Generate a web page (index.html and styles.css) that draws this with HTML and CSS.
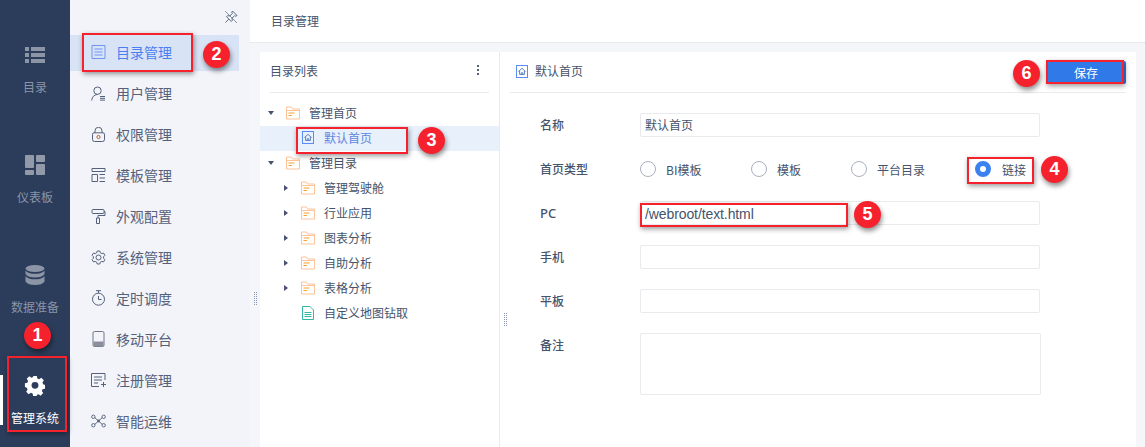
FILE: index.html
```html
<!DOCTYPE html>
<html lang="zh-CN">
<head>
  <meta charset="UTF-8" />
  <title>目录管理</title>
  <link rel="stylesheet" href="styles.css">
</head>
<body>
  <svg class="defs" width="0" height="0">
    <symbol id="folder" viewBox="0 0 14 14">
      <path d="M.5 13V1h4.800l1.400 2h6.800v10z" fill="none" stroke="#fdc39a"/>
      <path d="M.5 4.500h13" stroke="#fdc39a" fill="none"/>
      <path d="M2.500 7h6M2.500 9.500h3.500" stroke="#f9a02e" fill="none"/>
    </symbol>
    <symbol id="home" viewBox="0 0 12 13">
      <rect x=".5" y=".5" width="11" height="12" fill="none" stroke="#5b8cf5"/>
      <path d="M2.400 6.500 6 3.400l3.600 3.100M3.600 5.800v3.700h4.800V5.800M5.200 9.500V7.800h1.600v1.700" fill="none" stroke="#5f86c4"/>
    </symbol>
  </svg>

  <nav class="rail">
    <a class="rail-item">
      <svg class="rail-icon" width="20" height="16" viewBox="0 0 20 16"><path d="M0 0h4v4H0zM6 0h14v4H6zM0 6h4v4H0zM6 6h14v4H6zM0 12h4v4H0zM6 12h14v4H6z" fill="#8c95a6"/></svg>
      <span>目录</span>
    </a>
    <a class="rail-item">
      <svg class="rail-icon" width="20" height="20" viewBox="0 0 20 20"><path d="M1 0h7a1 1 0 0 1 1 1v11a1 1 0 0 1-1 1H1a1 1 0 0 1-1-1V1a1 1 0 0 1 1-1zM12 0h7a1 1 0 0 1 1 1v5a1 1 0 0 1-1 1h-7a1 1 0 0 1-1-1V1a1 1 0 0 1 1-1zM12 9h7a1 1 0 0 1 1 1v9a1 1 0 0 1-1 1h-7a1 1 0 0 1-1-1v-9a1 1 0 0 1 1-1zM1 15h7a1 1 0 0 1 1 1v3a1 1 0 0 1-1 1H1a1 1 0 0 1-1-1v-3a1 1 0 0 1 1-1z" fill="#9299a8"/></svg>
      <span>仪表板</span>
    </a>
    <a class="rail-item">
      <svg class="rail-icon" width="20" height="20" viewBox="0 0 20 20"><ellipse cx="10" cy="3.500" rx="9.500" ry="3.500" fill="#8c95a6"/><path d="M.5 5.500C2 8 5.500 8.800 10 8.800s8-.8 9.500-3.300v3.500C18 11.500 14.500 12.500 10 12.500S2 11.500.5 9zM.5 11c1.500 2.500 5 3.300 9.500 3.300s8-.8 9.500-3.300v5.500C18 19 14.500 20 10 20S2 19 .5 16.500z" fill="#8c95a6"/></svg>
      <span>数据准备</span>
    </a>
    <a class="rail-item active">
      <svg class="rail-icon" width="22" height="22" viewBox="0 0 22 22"><path fill="#fff" fill-rule="evenodd" d="M9 1h4l.6 2.700 1.900.8L17.900 3l2.800 2.800-1.500 2.400.8 1.900 2 .9v4l-2.700.6-.8 1.900 1.500 2.300-2.800 2.800-2.400-1.500-1.900.8L13 23H9l-.6-2.700-1.900-.8L4.100 21l-2.800-2.800 1.500-2.400-.8-1.900L-.1 13V9l2.700-.6.800-1.900L1.900 4.100 4.700 1.300 7.100 2.800 9 2zM11 7.500a3.800 3.800 0 1 0 0 7.600 3.800 3.800 0 0 0 0-7.600z" transform="translate(0 -1)"/></svg>
      <span>管理系统</span>
    </a>
  </nav>

  <aside class="submenu">
    <div class="pin-row">
      <svg width="14" height="14" viewBox="0 0 14 14"><path d="M8.500 1 13 5.500 11.800 6.200 10.500 5.700 8 8.200 8.300 10.500 7.300 11.500 2.500 6.700 3.500 5.700 5.800 6 8.300 3.500 7.800 2.200zM4.800 9.200 1.500 12.500" fill="none" stroke="#5c6a80"/><path d="M1 1l12 12" stroke="#5c6a80" stroke-width=".7"/></svg>
    </div>
    <ul class="menu">
      <li class="menu-item active">
        <svg width="14" height="14" viewBox="0 0 14 14"><path d="M.5.500h13v13H.5zM3 4h8M3 7h8M3 10h8" fill="none" stroke="#6f93f2"/></svg>
        目录管理
      </li>
      <li class="menu-item">
        <svg width="15" height="15" viewBox="0 0 15 15"><path d="M6.500 1a3.700 3.700 0 1 1 0 7.400 3.700 3.700 0 0 1 0-7.400zM.7 14.500C1 11 3 8.800 6.500 8.400M9 10.500h5M9 12.300h5M9 14.100h5" fill="none" stroke="#55617a"/></svg>
        用户管理
      </li>
      <li class="menu-item">
        <svg width="14" height="15" viewBox="0 0 14 15"><path d="M3.500 6V3.800a3.500 3.500 0 0 1 7 0V6M2.500 5.800h9a1.500 1.500 0 0 1 1.500 1.500v5.200a2 2 0 0 1-2 2H3a2 2 0 0 1-2-2V7.300a1.500 1.500 0 0 1 1.500-1.500z" fill="none" stroke="#55617a"/><circle cx="7" cy="10" r="1.600" fill="none" stroke="#b5652f"/></svg>
        权限管理
      </li>
      <li class="menu-item">
        <svg width="14" height="14" viewBox="0 0 14 14"><path d="M.5.500h13v3H.5zM.5 6.500h5.500v7H.5zM8 6.500h5.500M8 10h5.500M8 13.500h5.500" fill="none" stroke="#55617a"/></svg>
        模板管理
      </li>
      <li class="menu-item">
        <svg width="14" height="15" viewBox="0 0 14 15"><path d="M1.500.5h10a1 1 0 0 1 1 1v2a1 1 0 0 1-1 1h-10a1 1 0 0 1-1-1v-2a1 1 0 0 1 1-1zM12.500 2.500h1v4H6.500v2.500M5 9h3v5.500H5z" fill="none" stroke="#55617a"/></svg>
        外观配置
      </li>
      <li class="menu-item">
        <svg width="15" height="15" viewBox="0 0 15 15"><path d="M6.200 1h2.600l.5 1.800 1.500.8 1.800-.5 1.300 2.300-1.300 1.300v1.600l1.300 1.300-1.300 2.300-1.800-.5-1.500.8-.5 1.800H6.200l-.5-1.800-1.500-.8-1.800.5-1.300-2.300 1.300-1.300V6.700L1.100 5.400l1.300-2.300 1.800.5 1.500-.8z" fill="none" stroke="#55617a"/><circle cx="7.500" cy="7.500" r="2.500" fill="none" stroke="#55617a"/></svg>
        系统管理
      </li>
      <li class="menu-item">
        <svg width="14" height="16" viewBox="0 0 14 16"><circle cx="7" cy="9.200" r="6" fill="none" stroke="#55617a"/><path d="M4.500.7h5M7 .7v2.500M7 6v3.500h3" fill="none" stroke="#55617a"/></svg>
        定时调度
      </li>
      <li class="menu-item">
        <svg width="12" height="16" viewBox="0 0 12 16"><rect x=".5" y=".5" width="11" height="15" rx="1.500" fill="none" stroke="#6d7688"/><rect x="1" y="10.500" width="10" height="5" fill="#8a8f9b"/></svg>
        移动平台
      </li>
      <li class="menu-item">
        <svg width="15" height="14" viewBox="0 0 15 14"><path d="M14 7V.5H.5v13H8M3 4h8M3 7h8M3 10h4M10 11.500h5M12.500 9v5" fill="none" stroke="#55617a"/></svg>
        注册管理
      </li>
      <li class="menu-item">
        <svg width="16" height="14" viewBox="0 0 16 14"><path d="M3 2.500l10 9M13 2.500l-10 9" stroke="#55617a" fill="none"/><circle cx="2.500" cy="2.500" r="1.800" fill="#f2f4f9" stroke="#55617a"/><circle cx="13.500" cy="2.500" r="1.800" fill="#f2f4f9" stroke="#55617a"/><circle cx="2.500" cy="11.500" r="1.800" fill="#f2f4f9" stroke="#55617a"/><circle cx="13.500" cy="11.500" r="1.800" fill="#f2f4f9" stroke="#55617a"/><circle cx="8" cy="7" r="1.500" fill="#55617a"/></svg>
        智能运维
      </li>
    </ul>
  </aside>

  <main class="main">
    <header class="main-header">目录管理</header>
    <div class="workspace">
      <section class="tree-panel">
        <div class="panel-title">
          <span>目录列表</span>
          <span class="more"><i></i><i></i><i></i></span>
        </div>
        <ul class="tree">
          <li class="tree-row level-0"><i class="caret-down"></i><svg class="tree-icon"><use href="#folder"/></svg>管理首页</li>
          <li class="tree-row level-1 selected"><svg class="tree-icon small"><use href="#home"/></svg>默认首页</li>
          <li class="tree-row level-0"><i class="caret-down"></i><svg class="tree-icon"><use href="#folder"/></svg>管理目录</li>
          <li class="tree-row level-1"><i class="caret-right"></i><svg class="tree-icon"><use href="#folder"/></svg>管理驾驶舱</li>
          <li class="tree-row level-1"><i class="caret-right"></i><svg class="tree-icon"><use href="#folder"/></svg>行业应用</li>
          <li class="tree-row level-1"><i class="caret-right"></i><svg class="tree-icon"><use href="#folder"/></svg>图表分析</li>
          <li class="tree-row level-1"><i class="caret-right"></i><svg class="tree-icon"><use href="#folder"/></svg>自助分析</li>
          <li class="tree-row level-1"><i class="caret-right"></i><svg class="tree-icon"><use href="#folder"/></svg>表格分析</li>
          <li class="tree-row level-1 leaf">
            <svg class="tree-icon" viewBox="0 0 14 14"><path d="M1.500.5h7.500l3.500 3.500v9.500h-11zM3.500 6.500h7M3.500 8.500h7M3.500 10.500h7" fill="none" stroke="#35b5a5"/></svg>
            自定义地图钻取
          </li>
        </ul>
      </section>

      <section class="detail-panel">
        <div class="detail-head">
          <svg class="tree-icon small"><use href="#home"/></svg>
          <span class="detail-name">默认首页</span>
          <button class="save-btn">保存</button>
        </div>
        <div class="form">
          <label class="form-label">名称</label>
          <div class="field">默认首页</div>

          <label class="form-label">首页类型</label>
          <div class="radios">
            <span class="radio w-bi"><i></i>BI模板</span>
            <span class="radio w-tpl"><i></i>模板</span>
            <span class="radio w-plat"><i></i>平台目录</span>
            <span class="radio on"><i></i>链接</span>
          </div>

          <label class="form-label plain">PC</label>
          <div class="field url">/webroot/text.html</div>

          <label class="form-label">手机</label>
          <div class="field"></div>

          <label class="form-label">平板</label>
          <div class="field"></div>

          <label class="form-label">备注</label>
          <div class="field note"></div>
        </div>
      </section>
    </div>
  </main>

  <i class="grip grip-left"></i>
  <i class="grip grip-right"></i>

  <div class="box box-1"></div>
  <div class="box box-2"></div>
  <div class="box box-3"></div>
  <div class="box box-4"></div>
  <div class="box box-5"></div>
  <div class="box box-6"></div>
  <div class="dot dot-1">1</div>
  <div class="dot dot-2">2</div>
  <div class="dot dot-3">3</div>
  <div class="dot dot-4">4</div>
  <div class="dot dot-5">5</div>
  <div class="dot dot-6">6</div>
</body>
</html>
```

FILE: styles.css
```css
* {
  box-sizing: border-box;
}
html, body {
  height: 100%;
}
body {
  display: flex;
  margin: 0;
  overflow: hidden;
  font-family: 'Noto Sans CJK SC', 'Noto Sans', sans-serif;
  font-size: 12px;
  color: #45536b;
  background: #fff;
}
ul {
  list-style: none;
  margin: 0;
  padding: 0;
}
.defs {
  position: absolute;
}

/* left rail */
.rail {
  flex: 0 0 70px;
  background: #2c3d5b;
}
.rail-item {
  position: relative;
  display: flex;
  flex-direction: column;
  align-items: center;
  height: 110px;
  padding-top: 45px;
  color: #8a94a6;
  line-height: 16px;
}
.rail-icon {
  height: 20px;
  margin-bottom: 14px;
}
.rail-item:nth-child(4) {
  padding-top: 46px;
  color: #fff;
}
.rail-item.active::before {
  content: '';
  position: absolute;
  left: 0;
  top: 45px;
  width: 3px;
  height: 50px;
  background: #fff;
}

/* second level menu */
.submenu {
  flex: 0 0 180px;
  background: #f2f4f9;
}
.pin-row {
  display: flex;
  justify-content: flex-end;
  align-items: center;
  height: 33px;
  padding: 0 12px 0 0;
}
.menu-item {
  display: flex;
  align-items: center;
  gap: 10px;
  height: 36px;
  margin: 0 11px 5px 0;
  padding: 0 0 2px 21px;
  font-size: 14px;
  color: #55617a;
}
.menu-item svg {
  flex: 0 0 15px;
}
.menu-item:first-child {
  margin-top: 2px;
}
.menu-item.active {
  background: #d9e3f6;
  color: #4a7ff0;
}

/* main */
.main {
  flex: 1;
  display: flex;
  flex-direction: column;
  min-width: 0;
}
.main-header {
  flex: 0 0 43px;
  padding-left: 21px;
  line-height: 42px;
  border-bottom: 1px solid #e8eaee;
}
.workspace {
  flex: 1;
  display: flex;
  padding: 9px 9px 0 10px;
  background: #f5f6f9;
}
.tree-panel {
  flex: 0 0 240px;
  background: #fff;
  border-right: 1px solid #e8eaee;
}
.panel-title {
  display: flex;
  justify-content: space-between;
  align-items: center;
  height: 41px;
  margin: 0 10px;
  padding-bottom: 4px;
  border-bottom: 1px solid #e8eaee;
}
.more {
  display: flex;
  flex-direction: column;
  gap: 2px;
  margin-right: 10px;
}
.more i {
  width: 2px;
  height: 2px;
  background: #55617a;
}
.tree {
  padding-top: 8px;
}
.tree-row {
  position: relative;
  display: flex;
  align-items: center;
  height: 25px;
  padding-bottom: 2px;
}
.level-0 {
  padding-left: 26px;
}
.level-1 {
  padding-left: 41px;
}
.tree-row.selected {
  background: #e8f0fc;
  color: #5f87e0;
}
.tree-icon {
  flex: 0 0 14px;
  width: 14px;
  height: 14px;
  margin-right: 9px;
}
.tree-icon.small {
  flex-basis: 12px;
  width: 12px;
  height: 13px;
  margin-right: 10px;
  margin-left: 1px;
}
.caret-down {
  position: absolute;
  left: 8px;
  top: 10px;
  border-top: 4px solid #45536b;
  border-left: 3.500px solid transparent;
  border-right: 3.500px solid transparent;
}
.caret-right {
  position: absolute;
  left: 24px;
  top: 9px;
  border-left: 4px solid #4a4f73;
  border-top: 3.500px solid transparent;
  border-bottom: 3.500px solid transparent;
}

/* detail */
.detail-panel {
  flex: 1;
  background: #fff;
  padding: 0 10px;
}
.detail-head {
  display: flex;
  align-items: center;
  height: 41px;
  padding-left: 4px;
  border-bottom: 1px solid #e8eaee;
}
.detail-head .tree-icon {
  margin: 0 7px 2px 2px;
}
.detail-name {
  flex: 1;
  margin-bottom: 4px;
}
.save-btn {
  width: 80px;
  height: 23px;
  padding: 0;
  border: none;
  border-radius: 2px;
  font: inherit;
  color: #fff;
  background: #2f7ae8;
}
.form {
  display: grid;
  grid-template-columns: 100px 400px;
  grid-auto-rows: 24px;
  row-gap: 20px;
  padding: 20px 0 0 30px;
}
.form-label {
  font-weight: 500;
  line-height: 24px;
}
.form-label.plain {
  font-family: 'Noto Sans', sans-serif;
  font-size: 13px;
}
.field {
  height: 24px;
  padding-left: 4px;
  border: 1px solid #e8eaee;
  border-radius: 2px;
  line-height: 22px;
}
.field.url {
  font-family: 'Liberation Sans', sans-serif;
  font-size: 14px;
  letter-spacing: -0.1px;
  line-height: 24px;
}
.field.note {
  width: 401px;
  height: 62px;
}
.radios {
  display: flex;
  align-items: center;
}
.radio {
  display: flex;
  align-items: center;
  gap: 10px;
}
.radio i {
  width: 16px;
  height: 16px;
  border: 1px solid #aab1bf;
  border-radius: 50%;
}
.radio.w-bi {
  width: 111px;
}
.radio.w-tpl {
  width: 100px;
}
.radio.w-plat {
  width: 124px;
}
.radio.on {
  gap: 11px;
}
.radio.on i {
  border: 5px solid #3b82f0;
  background: #fff;
}

/* splitter grips */
.grip {
  position: absolute;
  width: 5px;
  height: 14px;
  background: conic-gradient(#8a96b4 25%, transparent 0) 0 0 / 2px 2px;
}
.grip-left {
  left: 253px;
  top: 292px;
}
.grip-right {
  left: 503px;
  top: 313px;
}

/* red callouts drawn on top of the screenshot */
.box {
  position: absolute;
  border: 2px solid #f5222d;
  box-shadow: 1px 2px 5px rgba(0, 0, 0, 0.4);
}
.box-1 {
  left: 7px;
  top: 356px;
  width: 60px;
  height: 76px;
}
.box-2 {
  left: 82px;
  top: 33px;
  width: 111px;
  height: 39px;
}
.box-3 {
  left: 296px;
  top: 127px;
  width: 112px;
  height: 27px;
}
.box-4 {
  left: 967px;
  top: 157px;
  width: 67px;
  height: 27px;
}
.box-5 {
  left: 640px;
  top: 203px;
  width: 208px;
  height: 24px;
}
.box-6 {
  left: 1046px;
  top: 60px;
  width: 78px;
  height: 24px;
}
.dot {
  position: absolute;
  width: 27px;
  height: 27px;
  border-radius: 50%;
  background: #f5222d;
  color: #fff;
  font-family: 'Liberation Sans', sans-serif;
  font-size: 18px;
  font-weight: bold;
  line-height: 27px;
  text-align: center;
  box-shadow: 1px 3px 5px rgba(0, 0, 0, 0.45);
}
.dot-1 {
  left: 24px;
  top: 322px;
}
.dot-2 {
  left: 203px;
  top: 41px;
}
.dot-3 {
  left: 418px;
  top: 127px;
}
.dot-4 {
  left: 1041px;
  top: 156px;
}
.dot-5 {
  left: 854px;
  top: 201px;
}
.dot-6 {
  left: 1013px;
  top: 60px;
}
```
